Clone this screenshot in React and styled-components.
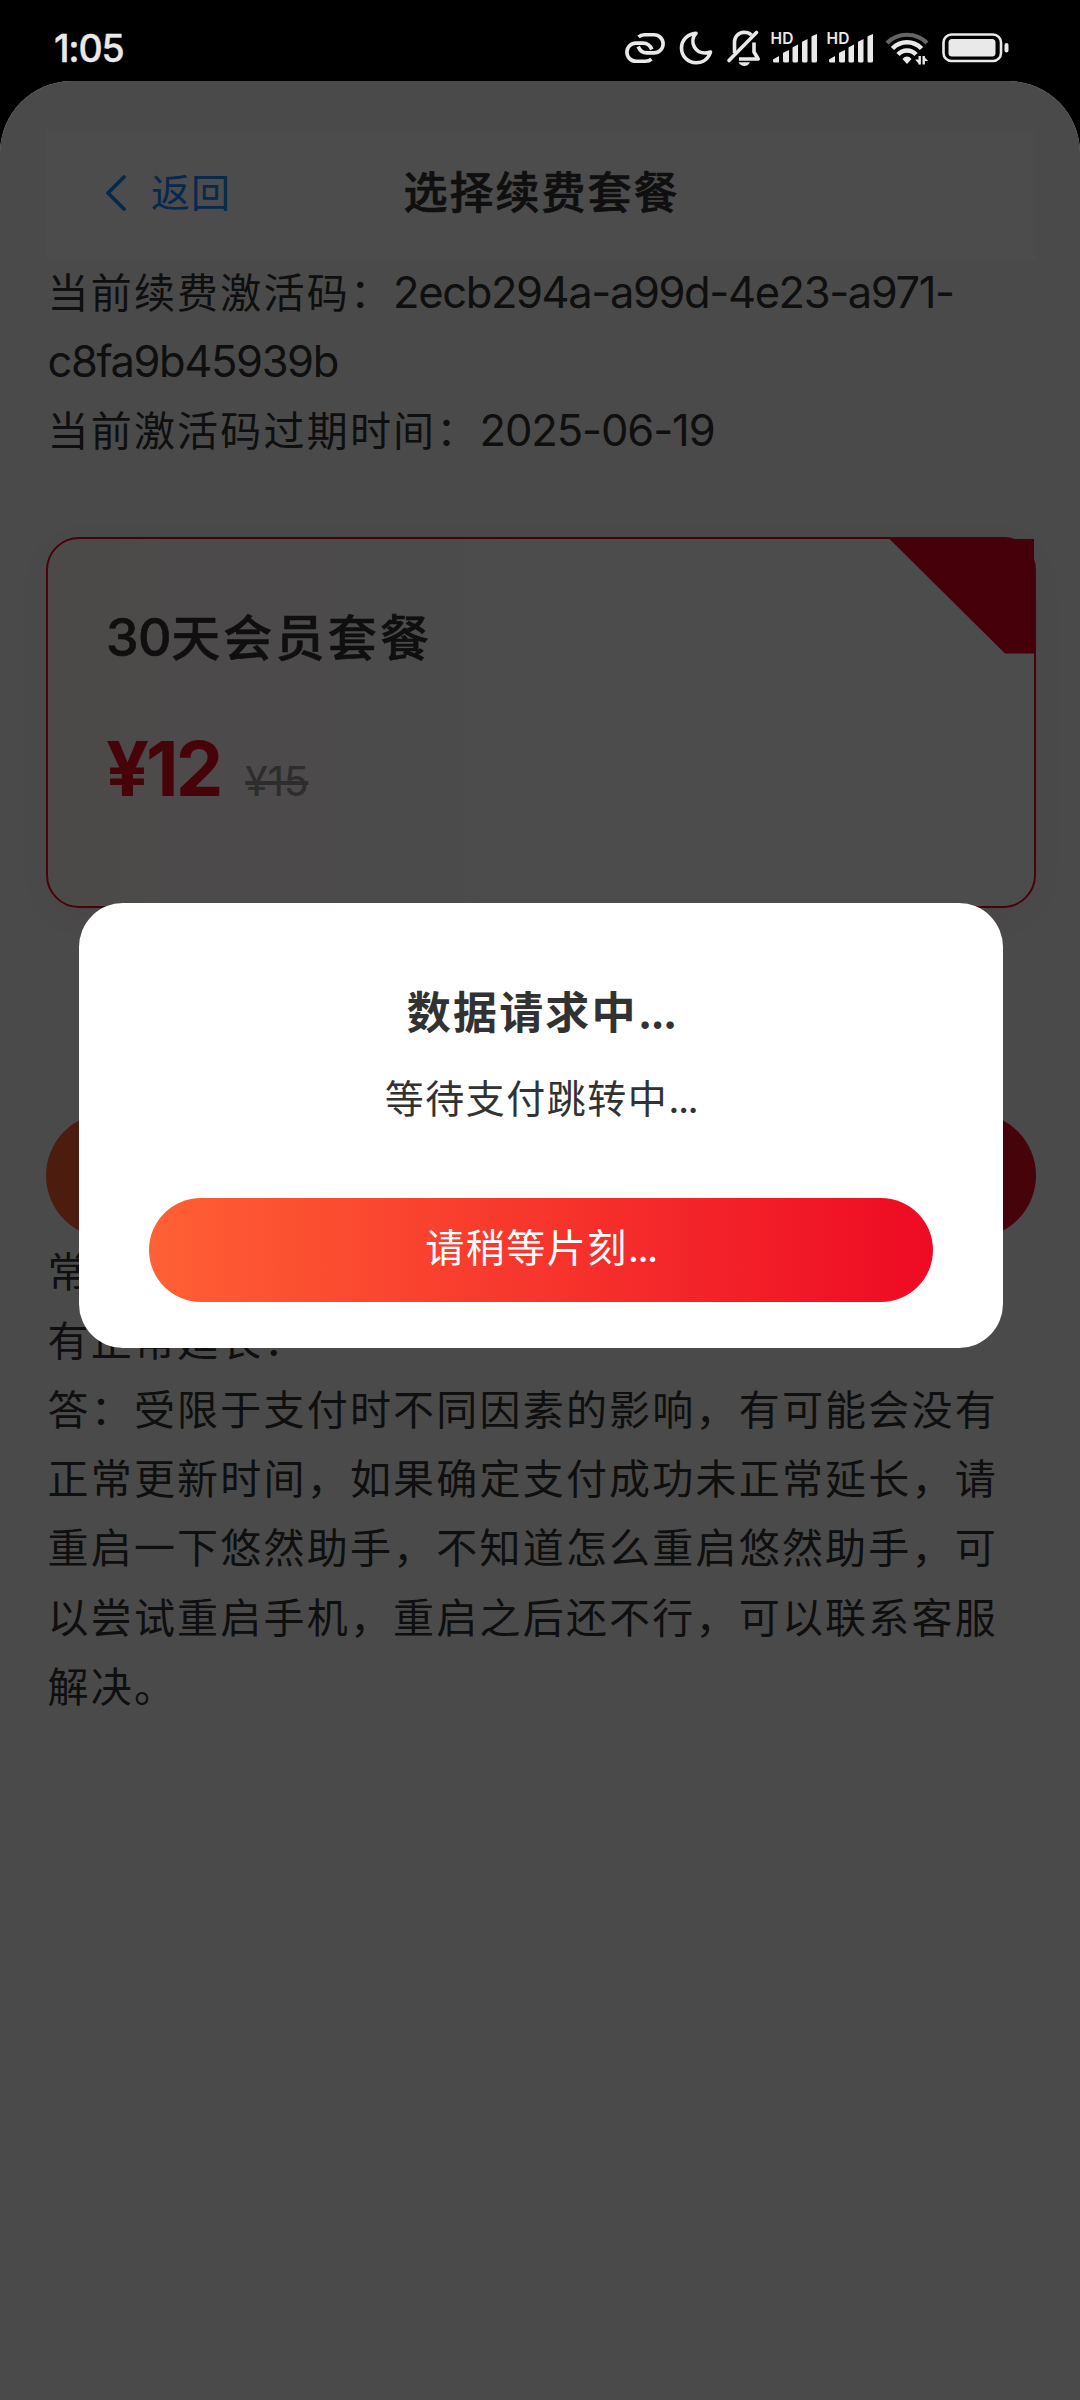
import React from "react"
import styled, { createGlobalStyle } from "styled-components"

const GlobalStyle = createGlobalStyle`
  * {
    box-sizing: border-box;
  }

  body {
    margin: 0;
    background: #000;
    font-family: Inter, "Noto Sans CJK SC", sans-serif;
    color: #323233;
  }
`

const Screen = styled.div`
  width: 1080px;
  height: 2400px;
  display: flex;
  flex-direction: column;
  background: #000;
  overflow: hidden;
`

const StatusBar = styled.div`
  height: 81px;
  flex: none;
  display: flex;
  align-items: center;
  justify-content: space-between;
  padding: 15px 71px 0 54px;
  color: #e9e9e9;
`

const Clock = styled.span`
  padding-top: 1px;
  font-size: 37.5px;
  font-weight: 500;
  line-height: 66px;
  letter-spacing: -1.2px;
  -webkit-text-stroke: 0.4px;
`

const StatusIcons = styled.div`
  display: flex;
  align-items: center;

  svg {
    display: block;
    overflow: visible;
  }
`

const Sheet = styled.div`
  position: relative;
  flex: 1;
  padding: 48px 44px 0 46px;
  background: #f7f8fa;
  border-radius: 72px 72px 0 0;
  overflow: hidden;
`

const NavBar = styled.header`
  height: 130px;
  display: grid;
  grid-template-columns: 1fr auto 1fr;
  align-items: center;
  padding: 0 60px 2px;
  background: #fff;
`

const BackLink = styled.a`
  display: flex;
  align-items: center;
  gap: 25px;
  color: #1989fa;
  font-size: 39px;
  letter-spacing: 1px;
  line-height: 60px;
`

const NavTitle = styled.h1`
  margin: 0;
  padding-left: 1px;
  font-size: 44px;
  font-weight: 500;
  line-height: 60px;
  letter-spacing: 2px;
  -webkit-text-stroke: 0.7px;
`

const Paragraph = styled.p`
  margin: 0;
  padding-left: 1.5px;
  font-size: 41px;
  line-height: 69.2px;
  letter-spacing: 2.2px;
`

const Code = styled.span`
  font-size: 43.5px;
  letter-spacing: ${props => props.$spacing || "-1.4px"};
  line-height: 1;
`

const PlanCard = styled.section`
  position: relative;
  height: 371px;
  margin-top: 70px;
  padding: 64px 58px 0;
  border: 2px solid #ee0a24;
  border-radius: 33px;
  background: linear-gradient(90deg, #fff5f5, #fff 60%);
  box-shadow: 0 8px 34px rgba(238, 10, 36, 0.08);
`

const Ribbon = styled.div`
  position: absolute;
  top: 0;
  right: 0;
  width: 145px;
  height: 115px;
  background: #e6001f;
  clip-path: polygon(0 0, 100% 0, 100% 100%, 116px 100%);
`

const PlanName = styled.h2`
  margin: 0;
  font-size: 49px;
  font-weight: 500;
  line-height: 72px;
  letter-spacing: 3.2px;
  -webkit-text-stroke: 0.6px;
`

const Days = styled.span`
  font-size: 52px;
  letter-spacing: -0.5px;
  line-height: 1;
`

const PriceRow = styled.div`
  display: flex;
  align-items: baseline;
  gap: 25px;
  margin-top: 48px;
  line-height: 92px;
`

const Price = styled.span`
  font-size: 75.6px;
  font-weight: 700;
  letter-spacing: -3px;
  color: #ee0a24;
`

const OldPrice = styled.del`
  font-size: 41px;
  letter-spacing: -0.4px;
  color: #969799;
`

const Pill = styled.button`
  display: block;
  width: 100%;
  height: ${props => props.$height}px;
  margin-top: ${props => props.$top}px;
  padding: 0 0 10px;
  border: 0;
  border-radius: 999px;
  background: linear-gradient(90deg, #ff6034, #ee0a24);
  color: #fff;
  font-family: inherit;
  font-size: 39px;
  letter-spacing: 1.5px;
`

const Overlay = styled.div`
  position: absolute;
  inset: 0;
  padding-top: 822px;
  background: rgba(0, 0, 0, 0.7);
`

const Dialog = styled.div`
  width: 924px;
  height: 445px;
  margin: 0 auto 0 79px;
  padding: 76px 70px 0;
  border-radius: 44px;
  background: #fff;
  text-align: center;
`

const DialogTitle = styled.h3`
  margin: 0;
  font-size: 44px;
  font-weight: 700;
  line-height: 68px;
  letter-spacing: 2.2px;
`

const DialogText = styled.p`
  margin: 22px 0 0;
  font-size: 39px;
  line-height: 60px;
  letter-spacing: 1.5px;
`

const Dots = styled.span`
  letter-spacing: ${props => props.$spacing || "-1.6px"};
`

const LinkIcon = () => (
  <svg width="40" height="32" viewBox="0 0 40 32" fill="none" stroke="currentColor" strokeWidth="3.6">
    <path d="M13.500 4.800c1.800-1.600 3.500-2.100 6-2.100H29a9 9 0 0 1 0 18.200h-7c-4.200 0-7.200-2.200-8.800-6.400" />
    <path d="M26.500 27.200c-1.800 1.600-3.500 2.100-6 2.100H11a9 9 0 0 1 0-18.200h7c4.200 0 7.200 2.200 8.800 6.400" />
  </svg>
)

const MoonIcon = () => (
  <svg width="34" height="34" viewBox="0 0 34 34" fill="none" stroke="currentColor" strokeWidth="3.6" strokeLinejoin="round">
    <path d="M17 2.200C9 3 2.500 8.500 2.500 17c0 8.500 6.500 14.800 14.500 14.800 7 0 12.500-4.200 14.500-10.800C25 23.200 18.500 21.500 15.300 15.800 13 11.500 13.500 6 17 2.200z" />
  </svg>
)

const MutedBellIcon = () => (
  <svg width="34" height="37" viewBox="0 0 34 37" fill="none" stroke="currentColor" strokeWidth="3.600">
    <path d="M7.500 23V12C7.500 6.500 11.500 2.500 17 2.200c3 0 5.500 1 7.500 2.800" />
    <path d="M27 12.500v9.500l4.200 7H12" strokeLinejoin="round" />
    <path d="M2 30.500 29.500 2.500" strokeLinecap="round" />
    <path d="M11.500 32.300h11.500c-1.500 2.800-3.500 3.700-5.700 3.700s-4.500-1-5.800-3.700z" fill="currentColor" stroke="none" />
  </svg>
)

const SignalIcon = () => (
  <svg width="48" height="32" viewBox="0 0 48 32" fill="currentColor">
    <text x="-0.4" y="12.400" fontFamily="Inter, sans-serif" fontSize="15.500" fontWeight="600">
      HD
    </text>
    <path d="M2 27.500 8 24v6.500H3.500A1.500 1.500 0 0 1 2 29z" />
    <path d="M12 21.500a1 1 0 0 1 .7-1L18 18v11a1.500 1.500 0 0 1-1.500 1.500h-3A1.500 1.500 0 0 1 12 29z" />
    <path d="M21.500 16a1 1 0 0 1 .7-1l4.800-2.500V29a1.500 1.500 0 0 1-1.500 1.500H23a1.500 1.500 0 0 1-1.500-1.500z" />
    <path d="M31 10.500a1 1 0 0 1 .7-1L36.500 7v22a1.500 1.500 0 0 1-1.500 1.500h-2.500A1.500 1.500 0 0 1 31 29z" />
    <path d="M40.500 5a1 1 0 0 1 .7-1L46 2v27a1.500 1.500 0 0 1-1.500 1.500H42a1.500 1.500 0 0 1-1.500-1.500z" />
  </svg>
)

const WifiIcon = () => (
  <svg width="44" height="34" viewBox="0 0 44 34" fill="none" stroke="currentColor" strokeWidth="4.600">
    <path d="M2 12C13 1 31 1 42 12" stroke="#656565" strokeWidth="4.200" />
    <path d="M7.500 17.500c8-8.300 21-8.300 29 0" />
    <path d="M13 23.500c5-5.300 13-5.300 18 0" />
    <path d="M17.500 28c2.500-3.300 6.500-3.300 9 0L22 33z" fill="currentColor" stroke="none" />
    <path d="M34.700 25v8.500M38.700 33.500V25" strokeWidth="2.400" />
    <path d="m30 28.500 4.500 5V28.500zM43 30l-4.500-5v5z" fill="currentColor" stroke="none" />
  </svg>
)

const BatteryIcon = () => (
  <svg width="67" height="30" viewBox="0 0 67 30">
    <rect x="1.500" y="1.500" width="57.500" height="26.500" rx="8" fill="none" stroke="currentColor" strokeWidth="2.600" />
    <rect x="6.500" y="6" width="47" height="17.500" rx="3.500" fill="currentColor" />
    <rect x="62.500" y="10" width="4" height="9.500" rx="2" fill="currentColor" />
  </svg>
)

const Gap = styled.i`
  width: ${props => props.$w}px;
`

const ChevronLeft = () => (
  <svg width="20" height="36" viewBox="0 0 20 36" fill="none" stroke="currentColor" strokeWidth="3.800">
    <path d="M18 2 2 18l16 16" strokeLinecap="round" strokeLinejoin="round" />
  </svg>
)

const App = () => (
  <Screen>
    <GlobalStyle />
    <StatusBar>
      <Clock>1:05</Clock>
      <StatusIcons>
        <LinkIcon />
        <Gap $w={14} />
        <MoonIcon />
        <Gap $w={14} />
        <MutedBellIcon />
        <Gap $w={10} />
        <SignalIcon />
        <Gap $w={8} />
        <SignalIcon />
        <Gap $w={10} />
        <WifiIcon />
        <Gap $w={13} />
        <BatteryIcon />
      </StatusIcons>
    </StatusBar>
    <Sheet>
      <NavBar>
        <BackLink>
          <ChevronLeft />
          返回
        </BackLink>
        <NavTitle>选择续费套餐</NavTitle>
      </NavBar>
      <Paragraph>
        当前续费激活码：<Code>2ecb294a-a99d-4e23-a971-c8fa9b45939b</Code>
      </Paragraph>
      <Paragraph>
        当前激活码过期时间：<Code $spacing="-1.1px">2025-06-19</Code>
      </Paragraph>
      <PlanCard>
        <Ribbon />
        <PlanName>
          <Days>30</Days>天会员套餐
        </PlanName>
        <PriceRow>
          <Price>¥12</Price>
          <OldPrice>¥15</OldPrice>
        </PriceRow>
      </PlanCard>
      <Pill $height={125} $top={205}>立即支付</Pill>
      <Paragraph>
        常见问题：支付成功之后为什么我的激活码时间没有正常延长：
      </Paragraph>
      <Paragraph>
        答：受限于支付时不同因素的影响，有可能会没有正常更新时间，如果确定支付成功未正常延长，请重启一下悠然助手，不知道怎么重启悠然助手，可以尝试重启手机，重启之后还不行，可以联系客服解决。
      </Paragraph>
      <Overlay>
        <Dialog>
          <DialogTitle>
            数据请求中<Dots $spacing="-2.2px">...</Dots>
          </DialogTitle>
          <DialogText>
            等待支付跳转中<Dots>...</Dots>
          </DialogText>
          <Pill $height={104} $top={69}>
            请稍等片刻<Dots>...</Dots>
          </Pill>
        </Dialog>
      </Overlay>
    </Sheet>
  </Screen>
)

export default App
